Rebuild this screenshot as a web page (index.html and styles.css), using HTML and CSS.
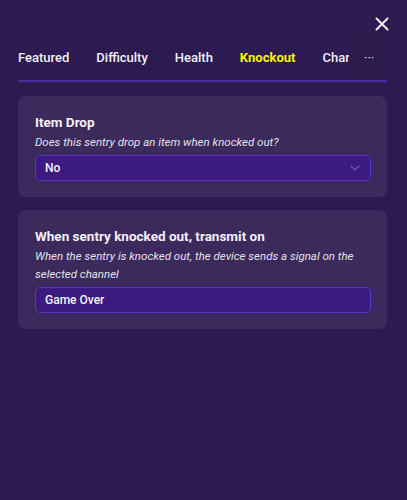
FILE: index.html
```html
<!DOCTYPE html>
<html lang="en">
<head>
<meta charset="utf-8">
<title>Sentry settings</title>
<link rel="stylesheet" href="styles.css">
</head>
<body>
<div class="panel">
  <div class="header">
    <button class="close" aria-label="Close">
      <svg width="14" height="14" viewBox="0 0 14 14"><path d="M1.5 1.5 L12.5 12.5 M12.5 1.5 L1.5 12.5" stroke="#f4f2f8" stroke-width="2" stroke-linecap="round"/></svg>
    </button>
  </div>
  <div class="tabs">
    <div class="tab-track">
      <span class="tab">Featured</span>
      <span class="tab">Difficulty</span>
      <span class="tab">Health</span>
      <span class="tab active">Knockout</span>
      <span class="tab last">Character</span>
    </div>
    <div class="more">···</div>
  </div>
  <div class="card">
    <div class="title">Item Drop</div>
    <div class="desc">Does this sentry drop an item when knocked out?</div>
    <div class="field select">
      <span>No</span>
      <svg width="10" height="6" viewBox="0 0 10 6"><path d="M0.8 0.8 L5 5 L9.2 0.8" fill="none" stroke="#7a5cc8" stroke-width="1.2"/></svg>
    </div>
  </div>
  <div class="card">
    <div class="title">When sentry knocked out, transmit on</div>
    <div class="desc">When the sentry is knocked out, the device sends a signal on the selected channel</div>
    <div class="field"><span>Game Over</span></div>
  </div>
</div>
</body>
</html>
```
FILE: styles.css
```css
* { box-sizing: border-box; }
html, body { margin: 0; height: 100%; }
body {
  background: #2d1a50;
  font-family: Roboto, "Noto Sans", sans-serif;
  color: #f3f1f7;
}
.panel { padding: 0 20px 0 18px; }
.header {
  height: 48px;
  display: flex;
  justify-content: flex-end;
  align-items: flex-start;
  padding-top: 17px;
}
.close {
  background: none;
  border: 0;
  padding: 0;
  margin-right: -2px;
  width: 14px;
  height: 14px;
  display: block;
}
.close svg { display: block; }
.tabs {
  position: relative;
  border-bottom: 2px solid #4b2aa0;
  margin-bottom: 14px;
}
.tab-track {
  display: flex;
  gap: 27px;
  overflow: hidden;
  white-space: nowrap;
  margin-right: 38px;
}
.tab {
  position: relative;
  flex-shrink: 0;
  font-size: 13px;
  line-height: 20px;
  font-weight: 500;
  padding-bottom: 12px;
  color: #f1eff6;
}
.tab.last {
  flex-shrink: 1;
  min-width: 0;
  overflow: hidden;
  text-overflow: clip;
}
.tab.active {
  color: #f5f500;
  font-weight: 700;
}
.tab.active::after {
  content: "";
  position: absolute;
  left: 0;
  right: 0;
  bottom: -2px;
  height: 2px;
  background: #f0ee2a;
}
.more {
  position: absolute;
  top: -15px;
  bottom: 0;
  right: 0;
  width: 38px;
  background: #2b1a4c;
  padding-top: 15px;
  padding-left: 15px;
  font-size: 13px;
  line-height: 20px;
  color: #e8e4f0;
}
.card {
  background: #3b2a5b;
  border-radius: 8px;
  padding: 16px 16px 16px 17px;
  margin-bottom: 13px;
}
.title {
  font-size: 13.5px;
  line-height: 20px;
  font-weight: 700;
}
.desc {
  margin-top: 1px;
  font-size: 11.5px;
  line-height: 18px;
  font-style: italic;
  color: #e4e0ec;
}
.field {
  margin-top: 4px;
  height: 26px;
  background: #3d1a80;
  border: 1.5px solid #5a34c6;
  border-radius: 5px;
  display: flex;
  align-items: center;
  justify-content: space-between;
  padding: 0 10px 0 9px;
  font-size: 12px;
  font-weight: 500;
  color: #f4f2f8;
}
.field svg { display: block; }
```
